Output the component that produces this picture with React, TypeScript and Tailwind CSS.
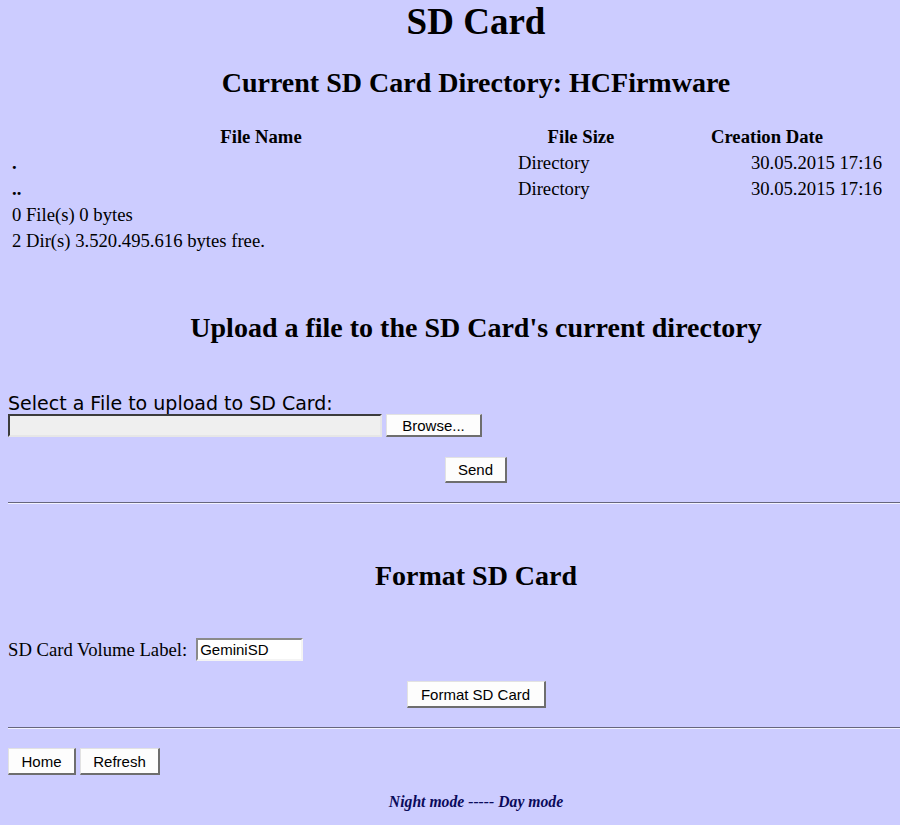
import React from 'react';

const rows = [
    { name: '.', size: 'Directory', date: '30.05.2015 17:16' },
    { name: '..', size: 'Directory', date: '30.05.2015 17:16' },
];

function Btn({ children, className = '' }: { children: React.ReactNode; className?: string }) {
    return (
        <button
            className={`bg-[#fdfdfd] border border-t-[#e2e2e2] border-l-[#e2e2e2] border-r-2 border-b-2 border-r-[#6e6e6e] border-b-[#6e6e6e] font-['Liberation_Sans',Arial,sans-serif] text-[15px] text-black leading-none ${className}`}
        >
            {children}
        </button>
    );
}

function Rule() {
    return (
        <div className="mt-[19px] w-full">
            <div className="h-px bg-[#66667e]" />
            <div className="h-px bg-[#f2f2ff]" />
        </div>
    );
}

export default function App() {
    return (
        <div className="min-h-screen w-[900px] overflow-hidden bg-[#ccccff]">
            <div className="ml-2 w-[936px] pb-4 font-['Liberation_Serif','Times_New_Roman',serif] text-black text-[18.67px]">
                <h1 className="pt-[3px] text-center text-[37px] font-bold leading-[37px]">SD Card</h1>

                <h2 className="mt-[29px] text-center text-[28px] font-bold leading-[28px]">
                    Current SD Card Directory: HCFirmware
                </h2>

                <table className="mt-[27px] border-collapse">
                    <tbody>
                        <tr className="h-[26px]">
                            <th className="w-[506px] px-1 font-bold leading-[22px]">File Name</th>
                            <th className="w-[134px] px-1 font-bold leading-[22px]">File Size</th>
                            <th className="w-[238px] px-1 font-bold leading-[22px]">Creation Date</th>
                        </tr>
                        {rows.map((r) => (
                            <tr key={r.name} className="h-[26px] leading-[22px]">
                                <td className="pl-1 font-bold">{r.name}</td>
                                <td className="pl-1">{r.size}</td>
                                <td className="pr-1 text-right">{r.date}</td>
                            </tr>
                        ))}
                        <tr className="h-[26px] leading-[22px]">
                            <td className="pl-1" colSpan={3}>0 File(s) 0 bytes</td>
                        </tr>
                        <tr className="h-[26px] leading-[22px]">
                            <td className="pl-1" colSpan={3}>2 Dir(s) 3.520.495.616 bytes free.</td>
                        </tr>
                    </tbody>
                </table>

                <h2 className="mt-[60px] text-center text-[28px] font-bold leading-[28px]">
                    Upload a file to the SD Card's current directory
                </h2>

                <div className="mt-[52px] font-['DejaVu_Sans',Verdana,sans-serif] text-[19px] leading-[19px]">
                    Select a File to upload to SD Card:
                </div>
                <div className="mt-px flex items-center gap-1">
                    <div className="h-[23px] w-[374px] bg-[#efefef] border-2 border-t-[#3c3c3c] border-l-[#3c3c3c] border-r-[#e6e6e6] border-b-[#e6e6e6]" />
                    <Btn className="h-[23px] w-[96px]">Browse...</Btn>
                </div>
                <div className="mt-[20px] flex justify-center">
                    <Btn className="h-[26px] w-[62px]">Send</Btn>
                </div>

                <Rule />

                <h2 className="mt-[58px] text-center text-[28px] font-bold leading-[28px]">Format SD Card</h2>

                <div className="mt-[48px] flex items-center gap-[9px] leading-[23px]">
                    <span>SD Card Volume Label:</span>
                    <div className="flex h-[23px] w-[107px] items-center bg-white pl-[2px] border-2 border-t-[#8a8a8a] border-l-[#8a8a8a] border-r-[#f4f4f4] border-b-[#f4f4f4] font-['Liberation_Sans',Arial,sans-serif] text-[15px]">
                        GeminiSD
                    </div>
                </div>
                <div className="mt-[20px] flex justify-center">
                    <Btn className="h-[27px] w-[139px]">Format SD Card</Btn>
                </div>

                <Rule />

                <div className="mt-[19px] flex gap-1">
                    <Btn className="h-[27px] w-[68px]">Home</Btn>
                    <Btn className="h-[27px] w-[80px]">Refresh</Btn>
                </div>

                <div className="mt-[19px] text-center text-[15.7px] font-bold italic leading-[16px] text-[#0a0a5a]">
                    Night mode ----- Day mode
                </div>
            </div>
        </div>
    );
}
